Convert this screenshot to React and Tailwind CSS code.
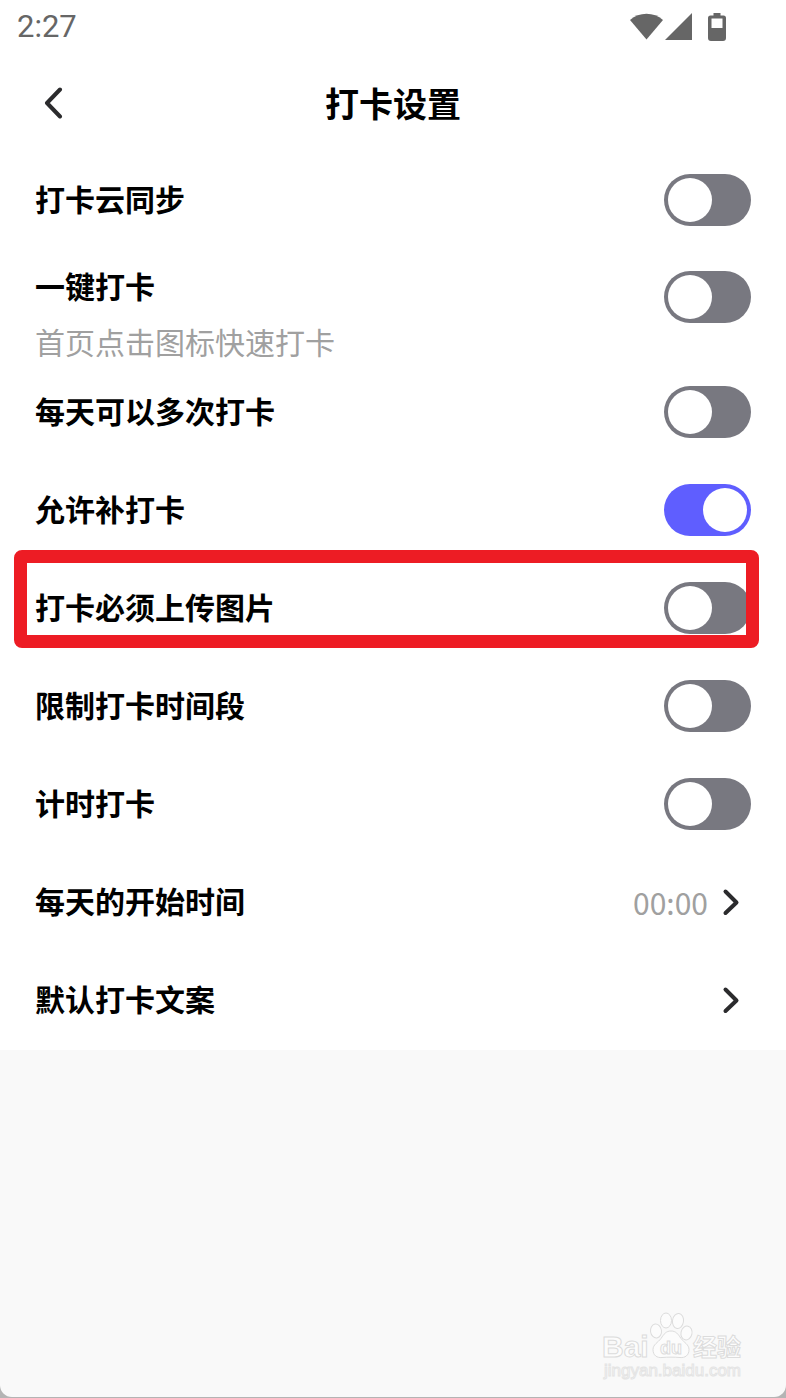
import React, { useState } from 'react';

const initialSettings = [
  { id: 'cloud-sync', title: '打卡云同步', checked: false },
  { id: 'one-tap', title: '一键打卡', hint: '首页点击图标快速打卡', checked: false },
  { id: 'multiple', title: '每天可以多次打卡', checked: false },
  { id: 'make-up', title: '允许补打卡', checked: true },
  { id: 'photo', title: '打卡必须上传图片', checked: false, highlighted: true },
  { id: 'time-range', title: '限制打卡时间段', checked: false },
  { id: 'timer', title: '计时打卡', checked: false },
];

const links = [
  { id: 'day-start', title: '每天的开始时间', value: '00:00' },
  { id: 'default-text', title: '默认打卡文案' },
];

const StatusBar = () => (
  <div className="h-[54px] pl-[17px] pr-[60px] flex items-center justify-between text-[#666666]">
    <span className="text-[31px] leading-[54px] font-[Roboto,sans-serif]">2:27</span>
    <div className="flex items-center">
      <svg className="w-[33px] h-7" viewBox="0 0 33 28" fill="currentColor" aria-hidden="true">
        <path d="M0 7C9-1.500 24-1.500 33 7L16.500 26.500z" />
      </svg>
      <svg className="ml-[2px] w-7 h-7" viewBox="0 0 28 28" fill="currentColor" aria-hidden="true">
        <path d="M0 27L27 0v27z" />
      </svg>
      <svg className="ml-[15px] w-[18px] h-7" viewBox="0 0 18 28" fill="currentColor" aria-hidden="true">
        <path
          fillRule="evenodd"
          d="M5.500 0h7v2.500H15.500a2.500 2.500 0 0 1 2.500 2.500V25a3 3 0 0 1-3 3H3a3 3 0 0 1-3-3V5a2.500 2.500 0 0 1 2.500-2.500H5.500zM3.500 5.500v9.500h11V5.500z"
        />
      </svg>
    </div>
  </div>
);

const Chevron = () => (
  <svg className="w-[18px] h-7" viewBox="0 0 18 28" fill="none" stroke="#2b2b2d" strokeWidth="4" strokeLinecap="round" strokeLinejoin="round" aria-hidden="true">
    <path d="M3.500 3.500L14.500 14.500L3.500 25" />
  </svg>
);

const SettingRow = ({ setting, onToggle }) => (
  <li className={`relative px-[35px] flex justify-between ${setting.hint ? 'h-[114px] items-start pt-[22px]' : 'h-[98px] items-center'}`}>
    <div className={setting.hint ? '-mt-1.5' : 'pb-1'}>
      <label htmlFor={setting.id} className="block text-[30px] leading-10 font-bold text-black">
        {setting.title}
      </label>
      {setting.hint && (
        <p id={`${setting.id}-hint`} className="mt-4 text-[30px] leading-10 text-[#a0a0a0]">
          {setting.hint}
        </p>
      )}
    </div>
    <input
      id={setting.id}
      type="checkbox"
      role="switch"
      checked={setting.checked}
      onChange={() => onToggle(setting.id)}
      aria-describedby={setting.hint ? `${setting.id}-hint` : undefined}
      className="appearance-none shrink-0 w-[87px] h-[52px] p-1 rounded-full bg-[#787880] checked:bg-[#5f5eff] cursor-pointer transition-colors before:content-[''] before:block before:size-11 before:rounded-full before:bg-white checked:before:ml-[35px]"
    />
    {setting.highlighted && (
      <div className="absolute left-[14px] right-[27px] -top-[9px] h-[98px] rounded-lg border-[13px] border-[#ed1c24] pointer-events-none" />
    )}
  </li>
);

const LinkRow = ({ item }) => (
  <li>
    <a href={`#${item.id}`} className="h-[98px] pl-[35px] pr-[46px] flex items-center justify-between">
      <span className="pb-1 text-[30px] leading-10 font-bold text-black">{item.title}</span>
      <span className="flex items-center gap-[14px] text-[30px] leading-10 text-[#a0a0a0]">
        {item.value && <span>{item.value}</span>}
        <Chevron />
      </span>
    </a>
  </li>
);

const Watermark = () => (
  <svg className="absolute right-[40px] bottom-[14px] w-36 h-[74px]" viewBox="0 0 144 74" fill="#fcfcfc" stroke="#dcdcdc" aria-label="Baidu经验">
    <text x="0" y="48" fontSize="30" fontWeight="700" fontFamily="Liberation Sans, sans-serif">Bai</text>
    <ellipse cx="54" cy="22" rx="5.500" ry="7" transform="rotate(-8 54 22)" />
    <ellipse cx="64" cy="11.500" rx="5.500" ry="7.500" />
    <ellipse cx="76" cy="12" rx="5.500" ry="7.500" transform="rotate(8 76 12)" />
    <ellipse cx="84.500" cy="24" rx="5.500" ry="7" transform="rotate(12 84.500 24)" />
    <path d="M69 22c5 0 7 3 10 7.500c3 4 8 6 8 11c0 6-4 8.500-9 8c-6-.500-12-.500-18 0c-5 .500-9-2-9-8c0-5 5-7 8-11c3-4.500 5-7.500 10-7.500z" />
    <text x="58" y="45" fontSize="18" fontFamily="Liberation Sans, sans-serif" fontWeight="700">du</text>
    <text x="91" y="47" fontSize="24" fontWeight="700" fontFamily="Noto Sans CJK SC, sans-serif">经验</text>
    <text x="2" y="67" fontSize="17" stroke="#e4e4e4" fontFamily="Liberation Sans, sans-serif">jingyan.baidu.com</text>
  </svg>
);

const App = () => {
  const [settings, setSettings] = useState(initialSettings);

  const handleToggle = (id) => {
    setSettings((prev) => prev.map((s) => (s.id === id ? { ...s, checked: !s.checked } : s)));
  };

  return (
    <div className="min-h-screen flex flex-col bg-[#b4b4b4] font-[Noto_Sans_CJK_SC,sans-serif]">
      <div className="relative flex-1 flex flex-col mb-px rounded-b-xl overflow-hidden bg-[#f9f9f9]">
        <div className="bg-white">
          <StatusBar />

          {/* Header */}
          <header className="h-[97px] px-[35px] grid grid-cols-[40px_1fr_40px] items-center">
            <button type="button" aria-label="返回" className="h-10 pl-2 flex items-center cursor-pointer">
              <svg className="w-5 h-8" viewBox="0 0 20 32" fill="none" stroke="#2b2b2d" strokeWidth="4" strokeLinecap="round" strokeLinejoin="round" aria-hidden="true">
                <path d="M17 2.500L4 16L17 29.500" />
              </svg>
            </button>
            <h1 className="text-center text-[34px] leading-[48px] font-bold text-black">打卡设置</h1>
          </header>

          <main className="pb-px">
            <ul>
              {settings.map((setting) => (
                <SettingRow key={setting.id} setting={setting} onToggle={handleToggle} />
              ))}
              {links.map((item) => (
                <LinkRow key={item.id} item={item} />
              ))}
            </ul>
          </main>
        </div>

        <Watermark />
      </div>
    </div>
  );
};

export default App;
